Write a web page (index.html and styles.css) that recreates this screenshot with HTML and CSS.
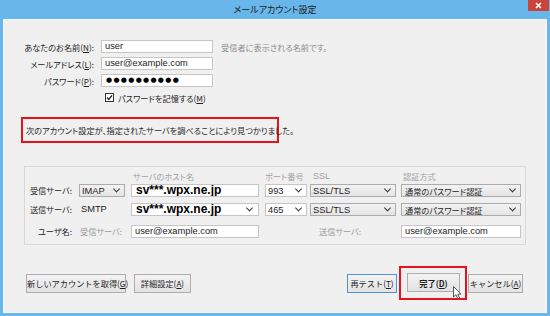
FILE: index.html
```html
<!DOCTYPE html>
<html lang="ja">
<head>
    <meta charset="UTF-8">
    <meta name="viewport" content="width=device-width, initial-scale=1.0">
    <title>メールアカウント設定</title>
    <link rel="stylesheet" href="styles.css">
</head>
<body>
<div class="window">
    <div class="titlebar">
        <span class="title">メールアカウント設定</span>
        <span class="close">
            <svg width="7" height="7" viewBox="0 0 7 7"><path d="M1 1 L6 6 M6 1 L1 6" stroke="#fff" stroke-width="1.6"/></svg>
        </span>
    </div>

    <div class="client">
        <div class="identity">
            <span class="lbl">あなたのお名前(<u>N</u>):</span>
            <div class="field">user</div>
            <span class="hint">受信者に表示される名前です。</span>

            <span class="lbl">メールアドレス(<u>L</u>):</span>
            <div class="field">user@example.com</div>
            <span></span>

            <span class="lbl">パスワード(<u>P</u>):</span>
            <div class="field dots">●●●●●●●●●●</div>
            <span></span>

            <span></span>
            <div class="remember">
                <span class="check">
                    <svg width="9" height="9" viewBox="0 0 9 9"><rect x="0.5" y="0.5" width="8" height="8" fill="#fff" stroke="#333"/><path d="M2 4.5 L3.8 6.4 L7 2.4" fill="none" stroke="#222" stroke-width="1.3"/></svg>
                </span>
                <span>パスワードを記憶する(<u>M</u>)</span>
            </div>
        </div>

        <div class="notice">次のアカウント設定が、指定されたサーバを調べることにより見つかりました。</div>

        <div class="servers">
            <span></span>
            <span></span>
            <span class="head c-host">サーバのホスト名</span>
            <span class="head c-port">ポート番号</span>
            <span class="head c-ssl">SSL</span>
            <span class="head c-auth">認証方式</span>

            <span class="lbl">受信サーバ:</span>
            <div class="select c-imap"><span class="latin">IMAP</span><i class="chev"></i></div>
            <div class="field c-host host">sv***.wpx.ne.jp</div>
            <div class="combo c-port"><span class="latin">993</span><i class="chev"></i></div>
            <div class="select c-ssl"><span class="latin">SSL/TLS</span><i class="chev"></i></div>
            <div class="select c-auth"><span>通常のパスワード認証</span><i class="chev"></i></div>

            <span class="lbl">送信サーバ:</span>
            <span class="c-imap plain latin">SMTP</span>
            <div class="combo c-host host"><span>sv***.wpx.ne.jp</span><i class="chev"></i></div>
            <div class="combo c-port"><span class="latin">465</span><i class="chev"></i></div>
            <div class="select c-ssl"><span class="latin">SSL/TLS</span><i class="chev"></i></div>
            <div class="select c-auth"><span>通常のパスワード認証</span><i class="chev"></i></div>

            <span class="lbl">ユーザ名:</span>
            <span class="c-imap muted">受信サーバ:</span>
            <div class="field c-host">user@example.com</div>
            <span></span>
            <span class="c-ssl muted outgoing">送信サーバ:</span>
            <div class="field c-auth">user@example.com</div>
        </div>

        <div class="actions">
            <div class="group">
                <button class="btn btn-new">新しいアカウントを取得(<u>G</u>)</button>
                <button class="btn btn-adv">詳細設定(<u>A</u>)</button>
            </div>
            <div class="group">
                <button class="btn btn-retest">再テスト(<u>T</u>)</button>
                <div class="mark">
                    <button class="btn btn-done">完了(<u>D</u>)</button>
                </div>
                <button class="btn btn-cancel">キャンセル(<u>A</u>)</button>
            </div>
        </div>
    </div>

    <svg class="cursor" width="10" height="14" viewBox="0 0 10 14">
        <path d="M0.5 0.5 L0.5 11 L3 8.7 L4.8 12.8 L6.5 12 L4.8 8.1 L8 8.1 Z" fill="#fff" stroke="#444" stroke-width="0.9" stroke-linejoin="round"/>
    </svg>
</div>
</body>
</html>
```

FILE: styles.css
```css
body {
    margin: 0;
    font-family: "Noto Sans CJK JP", sans-serif;
    font-feature-settings: "palt";
    font-size: 8.2px;
    color: #1e1e1e;
}
u {
    text-underline-offset: 1px;
}
.window {
    position: relative;
    width: 550px;
    height: 316px;
    box-sizing: border-box;
    padding: 0 3px 3px;
    background-color: #69b6ea;
    display: flex;
    flex-direction: column;
}
.titlebar {
    height: 19px;
    display: flex;
    align-items: center;
    justify-content: center;
}
.title {
    font-size: 9px;
    color: #1a1a1a;
}
.close {
    position: absolute;
    top: 0;
    right: 1px;
    width: 21px;
    height: 11px;
    background-color: #c9453c;
    display: flex;
    align-items: center;
    justify-content: center;
}
.client {
    flex: 1;
    box-sizing: border-box;
    padding-top: 20px;
    background-color: #f0f0f0;
    border: 1px solid #f8f8f8;
}
.latin,
.field,
.combo {
    font-family: "Liberation Sans", "Noto Sans CJK JP", sans-serif;
    font-size: 9.3px;
}

/* account identity */
.identity {
    display: grid;
    grid-template-columns: 90px 112px auto;
    grid-auto-rows: 13px;
    column-gap: 7px;
    row-gap: 4px;
    align-items: center;
}
.lbl {
    text-align: right;
    white-space: nowrap;
}
.hint {
    color: #8c8c8c;
    margin-left: 1px;
}
.field {
    height: 13px;
    box-sizing: border-box;
    border: 1px solid #c6c6c6;
    background-color: white;
    padding-left: 3px;
    line-height: 11px;
    white-space: nowrap;
    overflow: hidden;
}
.dots {
    font-family: "DejaVu Sans", sans-serif;
    font-size: 7px;
    letter-spacing: 1.3px;
    padding-left: 4px;
    color: #000;
}
.remember {
    display: flex;
    align-items: center;
    gap: 4px;
    margin-left: 4px;
    white-space: nowrap;
}
.check {
    display: flex;
}

/* notice */
.notice {
    margin: 13px 0 0 17px;
    width: 258px;
    height: 26px;
    box-sizing: border-box;
    border: 2px solid #e8121c;
    padding-left: 3px;
    display: flex;
    align-items: center;
    white-space: nowrap;
}

/* server settings */
.servers {
    margin: 23px 0 0 20px;
    width: 502px;
    box-sizing: border-box;
    border: 1px solid #d9d9d9;
    padding: 0 4px 6px 0;
    display: grid;
    grid-template-columns: 47px 53px 134px 48px 89px 125px;
    grid-template-rows: 17px 19px 22px 13px;
    align-items: start;
}
.c-imap { width: 46px; justify-self: end; }
.c-host { width: 128px; justify-self: end; }
.c-port { width: 42px; justify-self: end; }
.c-ssl  { width: 86px; justify-self: end; }
.c-auth { width: 120px; justify-self: end; }
.servers .lbl {
    line-height: 13px;
}
.head {
    align-self: center;
    color: #a2a2a2;
    padding-left: 2px;
    box-sizing: border-box;
}
.head.c-port {
    padding-left: 0;
}
.head.c-ssl {
    font-family: "Liberation Sans", sans-serif;
    font-size: 9px;
    padding-left: 3px;
}
.select,
.combo {
    height: 13px;
    box-sizing: border-box;
    border: 1px solid #acacac;
    display: flex;
    align-items: center;
    justify-content: space-between;
    padding: 0 5px 0 2px;
    white-space: nowrap;
}
.select {
    background: linear-gradient(#f2f2f2, #e4e4e4);
}
.combo {
    background-color: white;
    border-color: #c6c6c6;
}
.c-auth.select {
    padding-left: 3px;
}
.chev {
    width: 4px;
    height: 4px;
    border-right: 1.2px solid #333;
    border-bottom: 1.2px solid #333;
    transform: translateY(-1.5px) rotate(45deg);
}
.plain {
    line-height: 13px;
    padding-left: 2px;
    box-sizing: border-box;
}
.muted {
    color: #9a9a9a;
    line-height: 13px;
    padding-left: 1px;
    box-sizing: border-box;
}
.outgoing {
    padding-left: 9px;
}
.host {
    font-size: 12px;
    font-weight: bold;
    color: #000;
    padding-left: 4px;
    line-height: 11px;
}
.combo.host {
    padding-left: 4px;
    padding-right: 6px;
}
.combo.host span {
    background-color: white;
}

/* buttons */
.actions {
    margin-top: 21px;
    padding: 0 23px 0 22px;
    display: flex;
    justify-content: space-between;
    align-items: center;
}
.group {
    display: flex;
    align-items: center;
}
.btn {
    height: 19px;
    box-sizing: border-box;
    padding: 0;
    border: 1px solid #adadad;
    background: linear-gradient(#f3f3f3, #e3e3e3);
    font-family: inherit;
    font-size: 8.2px;
    color: #1e1e1e;
    white-space: nowrap;
}
.btn-new { width: 100px; }
.btn-adv { width: 57px; margin-left: 8px; }
.btn-retest {
    width: 50px;
    border-color: #4a93d8;
}
.mark {
    margin-left: 2px;
    border: 2px solid #e8121c;
    padding: 5px 5px 6px 6px;
    display: flex;
}
.btn-done {
    width: 53px;
    font-weight: bold;
}
.btn-cancel {
    width: 55px;
    margin-left: 1px;
}
.cursor {
    position: absolute;
    left: 453px;
    top: 286px;
}
```
